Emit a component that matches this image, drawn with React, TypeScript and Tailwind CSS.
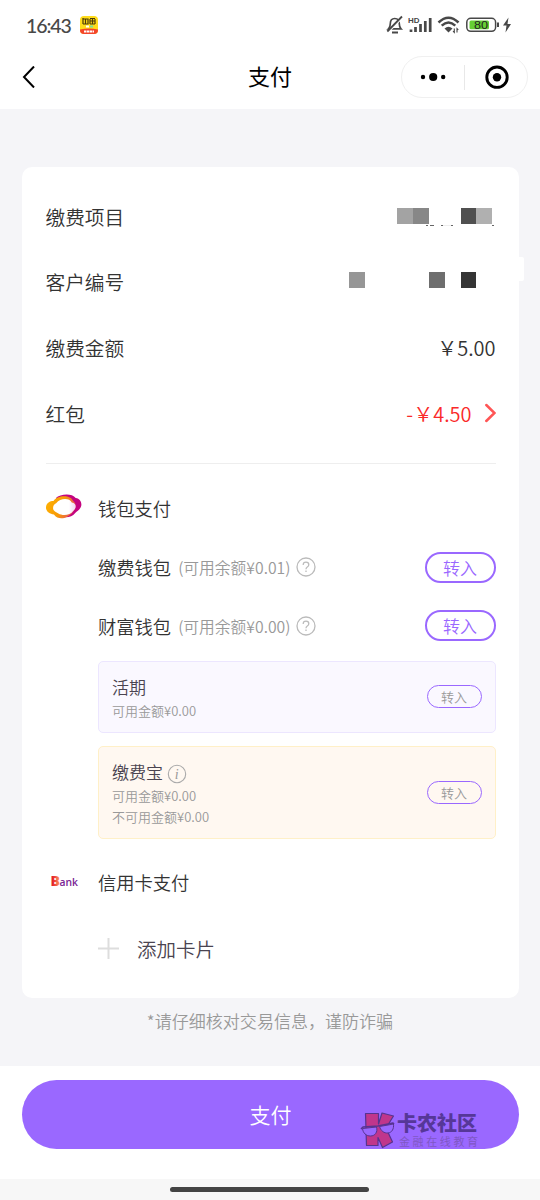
import React from "react";

const masks = {
    project: ["bg-[#a3a3a3] w-4", "bg-[#878787] w-4", "w-8", "bg-[#505050] w-[15px]", "bg-[#b0b0b0] w-4"],
    customer: ["bg-[#969696] w-4", "w-16", "bg-[#6e6e6e] w-4", "w-4", "bg-[#353535] w-[15px]"],
};

function Mask({ cells }: { cells: string[] }) {
    return (
        <div className="flex">
            {cells.map((c, i) => (
                <span key={i} className={`h-4 ${c}`} />
            ))}
        </div>
    );
}

function StatusBar() {
    return (
        <div className="flex h-[45px] items-center pt-[5px] pl-[26px] text-[#484848]">
            <span className="w-[54px] pt-[1px] font-[Lato] text-[19.500px] font-medium tracking-[-1.1px]">16:43</span>
            <svg width="18" height="18" viewBox="0 0 18 18">
                <rect width="18" height="18" rx="4" fill="#ffdc1b" />
                <path d="M0 13.500Q9 11.500 18 13.500V14a4 4 0 0 1-4 4H4a4 4 0 0 1-4-4z" fill="#f4452b" />
                <path d="M3 2v6M3 3h5v5H3M5.500 3v5M10 2.500h5M10 5h5M10 8h5M12.500 2v6M10 3v5M15 3v5" stroke="#4a3b08" strokeWidth="1.200" fill="none" />
                <path d="M6 10.500h3" stroke="#fff" strokeWidth="2" />
                <path d="M10 10.500h3" stroke="#7be09b" strokeWidth="2" />
                <path d="M4 15.500h10" stroke="#fff" strokeWidth="2" strokeDasharray="2.500 .5" />
            </svg>
            {/* notification, signal, wifi, battery */}
            <svg className="ml-[288px]" width="128" height="20" viewBox="386 15 128 20" fill="none" stroke="#484848">
                <path d="M389.500 28.800h11.500c-1.300-1.300-1.700-2.500-1.700-5 0-3-1.500-5.300-4.500-5.300s-4.500 2.300-4.500 5.300c0 2.500-.3 3.700-1.800 5h2" strokeWidth="1.700" />
                <path d="M388.300 32.300L403 17.300" stroke="#fff" strokeWidth="1.500" />
                <path d="M387.300 31.500L402 16.500" strokeWidth="1.800" />
                <path d="M392 32.500h6" strokeWidth="2" />
                <text x="408" y="22.800" fontSize="7.500" fontFamily="Liberation Sans" fontWeight="700" fill="#484848" stroke="none" textLength="11.500" lengthAdjust="spacingAndGlyphs">HD</text>
                <path d="M411 29.500v2.500M415.500 27v5M420.500 24v8M425.300 21v11M430.200 18v14" strokeWidth="2.700" />
                <path d="M438.500 22.500q10-9.500 20 0M441.700 25.700q6.800-6.300 13.600 0" strokeWidth="2.500" />
                <path d="M444.500 28.500q4-3.300 8 0l-4 4z" fill="#484848" stroke="none" />
                <path d="M454.300 28.500v4l-1.300-1.300M457 32.500v-4l1.300 1.300" strokeWidth="1.100" />
                <rect x="466.800" y="18.300" width="28.800" height="13" rx="4" strokeWidth="1.500" />
                <rect x="469.500" y="20.500" width="19.500" height="8.700" rx="1.500" fill="#66cf34" stroke="none" />
                <text x="474" y="28.800" fontSize="11" fontFamily="Liberation Sans" fill="#222" stroke="none" textLength="14" lengthAdjust="spacingAndGlyphs">80</text>
                <path d="M498 22.500v4.500" strokeWidth="2" />
                <path d="M508.500 17.500l-5.500 8h3.500l-1 7 5.500-8.500h-3.500z" fill="#484848" stroke="none" />
            </svg>
        </div>
    );
}

function NavBar() {
    return (
        <div className="grid h-16 grid-cols-[1fr_auto_1fr] items-center">
            <svg className="ml-[22px]" width="14" height="22" viewBox="0 0 14 22" fill="none">
                <path d="M12 0.500L2 11l10 10.500" stroke="#000" strokeWidth="2" />
            </svg>
            <h1 className="-mt-[4px] text-[22px] leading-8 font-normal text-black">支付</h1>
            <div className="mr-[12px] flex h-[42px] w-[127px] items-center justify-self-end rounded-full border border-[#f0f0f0]">
                <svg width="125" height="40" viewBox="0 0 125 40">
                    <circle cx="21" cy="20" r="2.200" />
                    <circle cx="31.200" cy="20" r="4.100" />
                    <circle cx="41.200" cy="20" r="2.200" />
                    <path d="M62.500 8v25" stroke="#e8e8e8" />
                    <circle cx="95" cy="20.200" r="10.200" fill="none" stroke="#000" strokeWidth="2.900" />
                    <circle cx="95" cy="20.200" r="4.200" />
                </svg>
            </div>
        </div>
    );
}

function InfoRow({ label, children }: { label: string; children: React.ReactNode }) {
    return (
        <div className="flex h-[65.7px] items-center justify-between text-[19.700px] text-[#333]">
            <span className="-mt-px">{label}</span>
            {children}
        </div>
    );
}

function WalletRow({ name, balance }: { name: string; balance: string }) {
    return (
        <div className="flex h-[58.5px] items-center pl-[52.5px]">
            <span className="pt-[2px] text-[18.300px] text-[#333]">{name}</span>
            <span className="ml-[7px] pt-[2px] text-[15.750px] text-[#999]">(可用余额¥{balance})</span>
            <svg className="ml-[6px]" width="20" height="20" viewBox="0 0 20 20" fill="none" stroke="#bbb" strokeWidth="1.300">
                <circle cx="10" cy="10" r="9" />
                <path d="M7.200 8q0-2.800 2.800-2.800t2.800 2.600q0 1.300-1.500 2.200-1.300.8-1.300 2.200M10 13.600v1.400" />
            </svg>
            <button className="ml-auto h-[31px] w-[71px] rounded-full border-[2.500px] border-[#9a68ff] text-[17px] leading-none text-[#9a68ff]">转入</button>
        </div>
    );
}

function SmallButton() {
    return (
        <button className="ml-auto h-[23px] w-[55px] rounded-full border border-[#9a68ff] text-[13px] leading-none text-[#999]">转入</button>
    );
}

export default function App() {
    return (
        <div className="relative flex h-[1200px] w-[540px] flex-col overflow-hidden bg-[#f5f5f8] font-['Noto_Sans_CJK_SC',sans-serif] font-[350]">
            <header className="h-[109px] bg-white">
                <StatusBar />
                <NavBar />
            </header>

            <main className="relative mt-[58px] mr-[21px] ml-[22px] h-[831px] rounded-[10px] bg-white pt-[17px] pr-[23.5px] pl-[23.5px]">
                <div className="absolute top-[90px] -right-[5px] h-6 w-[5px] rounded-r-xs bg-white" />
                <InfoRow label="缴费项目">
                    <div className="relative mr-[3.5px] -mt-[2px]">
                        <Mask cells={masks.project} />
                        <svg className="absolute top-[17px] left-0" width="98" height="1" viewBox="0 0 98 1">
                            <path d="M29 .5h2M33 .5h4M44 .5h2M54 .5h2M95 .5h2" stroke="#666" />
                            <path d="M46 .5h8" stroke="#eee" />
                        </svg>
                    </div>
                </InfoRow>
                <InfoRow label="客户编号">
                    <div className="mr-[19.5px] -mt-[5px]">
                        <Mask cells={masks.customer} />
                    </div>
                </InfoRow>
                <InfoRow label="缴费金额">
                    <span className="text-[20px]">￥5.00</span>
                </InfoRow>
                <InfoRow label="红包">
                    <span className="flex items-center text-[20px] text-[#fa2a2a]">
                        -￥4.50
                        <svg className="-mt-px ml-[13px]" width="11" height="20" viewBox="0 0 11 20" fill="none">
                            <path d="M1.300 2L9.500 10l-8.200 8" stroke="#f55" strokeWidth="2.500" strokeLinecap="round" />
                        </svg>
                    </span>
                </InfoRow>
                <div className="mt-4 h-px bg-[#eee]" />

                <div className="mt-[15px] flex h-[59px] items-center">
                    <svg className="-mt-[3px] w-[52.5px] shrink-0" width="53" height="28" viewBox="0 0 53 28">
                        <defs>
                            <linearGradient id="ring" x1="0" y1="0" x2="1" y2="0.300">
                                <stop offset="0" stopColor="#ffb400" />
                                <stop offset="0.600" stopColor="#f79a08" />
                                <stop offset="1" stopColor="#e85a50" />
                            </linearGradient>
                            <linearGradient id="inner" x1="0" y1="0" x2="1" y2="0">
                                <stop offset="0.700" stopColor="#fff" />
                                <stop offset="1" stopColor="#f3d3f2" />
                            </linearGradient>
                        </defs>
                        <path d="M10 5C14 1 26 -0.500 30 5c6 1 7.500 8 3.500 11.500-1.500 1.300-2.500 2-4 3.500-3 4-8 5-13 4z" fill="#c4047f" />
                        <path d="M7.500 8C11 2 25 1 27.500 8c2.500 2 3 5 1.500 8-3 5-4 6-8 8-4 2-10 2-13-2.500C3.500 21.500-.5 18 0 14 .5 10 4 8 7.500 8z" fill="url(#ring)" />
                        <path d="M10.500 10C14 5 24 4.500 26 9.500c5 1 5 5.500 1.500 8.500-3 4.500-11 5-15 2.500-2-1-2.500-1.500-4-2.500-2.500-2-1.500-6.500 2-8z" fill="url(#inner)" />
                    </svg>
                    <span className="text-[18.300px] text-[#333]">钱包支付</span>
                </div>
                <WalletRow name="缴费钱包" balance="0.01" />
                <WalletRow name="财富钱包" balance="0.00" />

                <div className="mt-[6px] ml-[52.5px] flex h-[72px] items-center rounded-[5px] border border-[#ece6ff] bg-[#faf8ff] px-[13px]">
                    <div className="pt-[4px]">
                        <p className="text-[17px] leading-6 text-[#4a4450]">活期</p>
                        <p className="text-[13px] leading-[23px] text-[#999]">可用金额¥0.00</p>
                    </div>
                    <SmallButton />
                </div>
                <div className="mt-[13px] ml-[52.5px] flex h-[93px] items-center rounded-[5px] border border-[#fff0c8] bg-[#fff8f1] px-[13px]">
                    <div>
                        <p className="flex items-center text-[17px] leading-[27px] text-[#4a4450]">
                            缴费宝
                            <svg className="mt-[5px] ml-[3.5px]" width="20" height="20" viewBox="0 0 20 20">
                                <circle cx="10" cy="10" r="8.700" fill="none" stroke="#aaa" strokeWidth="1.100" />
                                <text x="7.800" y="14.500" fontFamily="Liberation Serif" fontStyle="italic" fontSize="14" fill="#999">i</text>
                            </svg>
                        </p>
                        <p className="text-[13px] leading-[21px] text-[#999]">可用金额¥0.00</p>
                        <p className="text-[13px] leading-[21px] text-[#999]">不可用金额¥0.00</p>
                    </div>
                    <SmallButton />
                </div>

                <div className="mt-[14px] flex h-[59px] items-center">
                    <svg className="-mt-[4px] mr-[19.5px] ml-[4px]" width="29" height="20" viewBox="-1 -4 29 20">
                        <defs>
                            <linearGradient id="bank" x1="0" y1="0" x2="1" y2="0">
                                <stop offset="0.200" stopColor="#e3202e" />
                                <stop offset="1" stopColor="#ffa060" />
                            </linearGradient>
                        </defs>
                        <text x="-0.500" y="11.500" fontFamily="Open Sans" fontWeight="800" fontSize="14.500" fill="url(#bank)" textLength="9.500" lengthAdjust="spacingAndGlyphs">B</text>
                        <text x="8.500" y="11.500" fontFamily="Open Sans" fontWeight="600" fontSize="11.500" fill="#7a2494" textLength="18.500" lengthAdjust="spacingAndGlyphs">ank</text>
                    </svg>
                    <span className="text-[18.300px] text-[#333]">信用卡支付</span>
                </div>
                <div className="mt-[7px] flex h-[59px] items-center pl-[52.5px]">
                    <svg width="21" height="21" viewBox="0 0 21 21" stroke="#ddd" strokeWidth="2">
                        <path d="M0 10.500h21M10.500 0v21" />
                    </svg>
                    <span className="ml-[18px] text-[19.500px] text-[#4a4450]">添加卡片</span>
                </div>
            </main>

            <p className="mt-[9px] text-center text-[17.050px] leading-7 text-[#999]">*请仔细核对交易信息，谨防诈骗</p>

            <footer className="mt-auto bg-white">
                <div className="relative h-[113px] pt-[14px] pr-[21px] pl-[22px]">
                    <button className="block h-[69px] w-full rounded-full bg-[#9a68ff] text-[21px] text-white">支付</button>
                    {/* watermark */}
                    <div className="absolute top-[45px] left-[360px] flex">
                        <svg width="36" height="38" viewBox="0 0 36 38" stroke="#573390" strokeWidth="1.200" strokeLinejoin="round">
                            <path d="M5.500 2.500h13V13L22 2l11.500 3-7.500 12 6.500 14-10 5.500-4.500-10v8H6.500z" fill="#c0368c" />
                            <path d="M1 18l2-2 15-1 15-3 1 1" fill="none" strokeWidth="1.500" />
                            <path d="M2.500 17.500l14-1.500c1.500 5-1.500 9-6 9s-7.500-3-8-7.500zM19.500 15.500l14-2.500c.5 5-1.500 8.500-5.500 9-4 .3-7-2-8.500-6.500z" fill="#9a68ff" strokeWidth="1" />
                        </svg>
                        <div className="whitespace-nowrap">
                            <div className="h-[25px] pl-px text-[20px] leading-[23px] font-black text-[#563798]">卡农社区</div>
                            <div className="pl-[3px] text-[11px] leading-[11px] font-normal tracking-[2.600px] text-[#8057c5]">金融在线教育</div>
                        </div>
                    </div>
                </div>
                <div className="flex h-[21px] justify-center bg-[#f7f7f7] pt-[8px] pr-px">
                    <div className="h-[5px] w-[199px] rounded-full bg-[#444]" />
                </div>
            </footer>
        </div>
    );
}
